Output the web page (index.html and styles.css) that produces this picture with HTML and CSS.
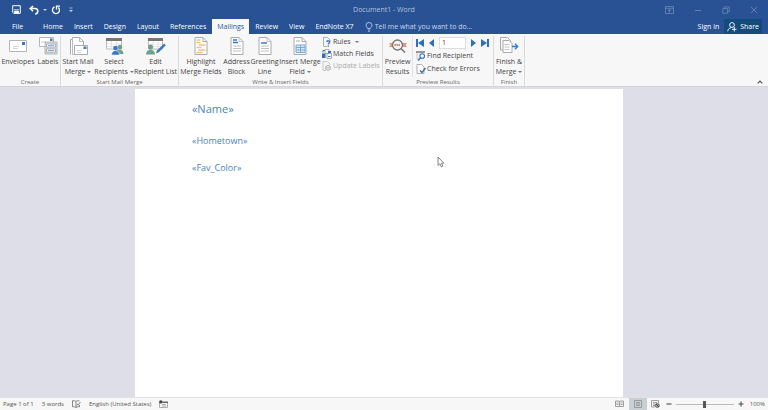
FILE: index.html
```html
<!DOCTYPE html>
<html lang="en">
<head>
<meta charset="utf-8">
<title>Document1 - Word</title>
<link rel="stylesheet" href="styles.css">
</head>
<body>
<header class="top">
  <div class="titlebar">
    <div class="quick">
      <button aria-label="Save"><svg width="9" height="9" viewBox="0 0 9 9"><path d="M.7.7h7.6v7.6H1.7l-1-1z" fill="none" stroke="#fff"/><path d="M2 4.7h5M2.5 6h4v2.500h-4z" fill="#fff" stroke="#fff" stroke-width=".7"/></svg></button>
      <button aria-label="Undo"><svg width="10" height="10" viewBox="0 0 10 10"><path d="M4 1L1.200 3.600 4 6.200M1.500 3.600H6c4 0 3.500 5 .2 5.300" fill="none" stroke="#fff" stroke-width="1.500"/></svg></button>
      <i class="caret quick-caret"></i>
      <button aria-label="Redo"><svg width="10" height="10" viewBox="0 0 10 10"><path d="M3.500 1.900a3.500 3.500 0 1 0 3.800.6M5.500 4.500V1.200H9" fill="none" stroke="#fff" stroke-width="1.300"/></svg></button>
      <button class="customize" aria-label="Customize Quick Access Toolbar"><svg width="4" height="6" viewBox="0 0 4 6"><path d="M.5 1h3" stroke="#c8d6ec" stroke-width=".8"/><path d="M0 3h4L2 5z" fill="#c8d6ec"/></svg></button>
    </div>
    <h1 class="title">Document1 - Word</h1>
    <div class="window-buttons">
      <button aria-label="Ribbon Display Options"><svg width="9" height="8" viewBox="0 0 9 8"><path d="M.5.5h8v7h-8zM.5 2.300h8M4.500 6.500v-3M3 4.800l1.500-1.300L6 4.800" fill="none" stroke="#6c8abb" stroke-width=".8"/></svg></button>
      <button aria-label="Minimize"><svg width="8" height="8" viewBox="0 0 8 8"><path d="M1 4.500h6" stroke="#6c8abb" stroke-width=".8"/></svg></button>
      <button aria-label="Restore"><svg width="8" height="8" viewBox="0 0 8 8"><path d="M.8 2.500h4.700v4.700H.8zM2.300 2.500V.9h4.900v4.700H5.500" fill="none" stroke="#6c8abb" stroke-width=".8"/></svg></button>
      <button aria-label="Close"><svg width="8" height="8" viewBox="0 0 8 8"><path d="M1 1l6 6M7 1L1 7" stroke="#6c8abb" stroke-width=".8"/></svg></button>
    </div>
  </div>
  <nav class="tabs">
    <button class="tab file">File</button>
    <button class="tab">Home</button>
    <button class="tab">Insert</button>
    <button class="tab">Design</button>
    <button class="tab">Layout</button>
    <button class="tab">References</button>
    <button class="tab active">Mailings</button>
    <button class="tab">Review</button>
    <button class="tab">View</button>
    <button class="tab">EndNote X7</button>
    <button class="tell"><svg width="8" height="10" viewBox="0 0 8 10"><path d="M2.600 6.500C2.500 5.300 1 4.700 1 3.200a3 2.700 0 0 1 6 0c0 1.500-1.500 2.100-1.600 3.300zM2.800 8h2.400M3.200 9.300h1.600" fill="none" stroke="#c8d6ec" stroke-width=".8"/></svg>Tell me what you want to do...</button>
    <div class="account">
      <button class="signin">Sign in</button>
      <button class="share"><svg width="10" height="10" viewBox="0 0 10 10"><circle cx="5" cy="3" r="2.400" fill="none" stroke="#fff" stroke-width=".9"/><path d="M.7 9.300C1 7 2.500 5.800 4.500 5.600M7.300 5v4.500M5 7.300h4.600" fill="none" stroke="#fff" stroke-width=".9"/></svg>Share</button>
    </div>
  </nav>
</header>

<section class="ribbon" aria-label="Mailings">
  <div class="group create">
    <div class="tools">
      <button class="big"><svg width="20" height="18" viewBox="0 0 20 18"><path d="M1.500 3.500h17v11h-17z" fill="#fff" stroke="#b4b4b4"/><path d="M14 5h3v3h-3z" fill="#3b78c3"/><path d="M5 9.500h6M5 11.500h5" stroke="#ccc" stroke-width=".8"/></svg><span>Envelopes</span></button>
      <button class="big"><svg width="20" height="18" viewBox="0 0 20 18"><path d="M1.500.5h14v9h-14z" fill="#fff" stroke="#b4b4b4"/><path d="M12 1.500h2.500V4H12z" fill="#3b78c3"/><path d="M3 5h5" stroke="#ccc"/><path d="M7 5h12v12H7z" fill="#ddd" stroke="#aaa" stroke-width=".8"/><path d="M8.500 7h9v3h-9zM8.500 12h9v3h-9z" fill="#fff" stroke="#8d9aaa" stroke-width=".7"/><path d="M10 8.500h6M10 13.500h6" stroke="#6f97c6" stroke-width=".8"/></svg><span>Labels</span></button>
    </div>
    <h2>Create</h2>
  </div>
  <div class="group start">
    <div class="tools">
      <button class="big"><svg width="20" height="18" viewBox="0 0 20 18"><path d="M2.500 17.500V2.500h2V.5h7l4 4v9" fill="#fff" stroke="#aaa"/><path d="M11.500.5v4h4M4.500 3v14.500h9" fill="none" stroke="#aaa" stroke-width=".8"/><path d="M6.500 8.500h13v9h-13z" fill="#fff" stroke="#aaa"/><path d="M15.500 9.500h3V12h-3z" fill="#3b78c3"/><path d="M9 13.500h5M9 15.500h4" stroke="#ccc" stroke-width=".8"/></svg><span>Start Mail</span><span>Merge <i class="caret"></i></span></button>
      <button class="big"><svg width="20" height="18" viewBox="0 0 20 18"><path d="M2.500 2h15v10h-15z" fill="#fff" stroke="#bbb"/><path d="M2 1h16v3H2z" fill="#777"/><path d="M3 7h14M3 9.500h14M7.500 4v8M12.500 4v8" stroke="#ddd" stroke-width=".8"/><circle cx="16" cy="10" r="2.300" fill="#6fa08e"/><path d="M11 17c0-6 8.500-6 8.500 0z" fill="#6fa08e"/><circle cx="11.500" cy="11" r="2.300" fill="#3b78c3"/><path d="M7.500 18c0-6 8-6 8 0z" fill="#3b78c3" stroke="#fff" stroke-width=".5"/></svg><span>Select</span><span>Recipients <i class="caret"></i></span></button>
      <button class="big"><svg width="20" height="18" viewBox="0 0 20 18"><path d="M2.500 2h14v10h-14z" fill="#fff" stroke="#bbb"/><path d="M2 1h15v3H2z" fill="#777"/><path d="M3 7h13M3 9.500h13M7 4v8M12 4v8" stroke="#ddd" stroke-width=".8"/><circle cx="4.500" cy="10" r="2.500" fill="#6fa08e"/><path d="M0 17.500c0-6.500 9-6.500 9 0z" fill="#6fa08e"/><path d="M10 16.500l1-3 7-7 1.800 1.800-7 7z" fill="#3b78c3"/></svg><span>Edit</span><span>Recipient List</span></button>
    </div>
    <h2>Start Mail Merge</h2>
  </div>
  <div class="group write">
    <div class="tools">
      <button class="big"><svg width="14" height="18" viewBox="0 0 14 18"><path d="M1 .5h8l4 4v13H1z" fill="#fff" stroke="#aaa"/><path d="M9 .5v4h4" fill="none" stroke="#aaa"/><path d="M2.500 3h4M2.500 5.500h4M4.500 8h7M2.500 10.500h5M4.500 13h7M2.500 15.500h6" stroke="#f5c377" stroke-width="1.500"/></svg><span>Highlight</span><span>Merge Fields</span></button>
      <button class="big"><svg width="14" height="18" viewBox="0 0 14 18"><path d="M1 .5h8l4 4v13H1z" fill="#fff" stroke="#aaa"/><path d="M9 .5v4h4M3 9h8M3 11.500h8M3 14h8" fill="none" stroke="#c0c0c0"/><path d="M3 3h4M3 5.500h5" stroke="#3b78c3" stroke-width="1.500"/></svg><span>Address</span><span>Block</span></button>
      <button class="big"><svg width="14" height="18" viewBox="0 0 14 18"><path d="M1 .5h8l4 4v13H1z" fill="#fff" stroke="#aaa"/><path d="M9 .5v4h4M3 9h8M3 11.500h8M3 14h8" fill="none" stroke="#c0c0c0"/><path d="M3 6h6" stroke="#3b78c3" stroke-width="1.500"/></svg><span>Greeting</span><span>Line</span></button>
      <button class="big"><svg width="14" height="18" viewBox="0 0 14 18"><path d="M1 .5h8l4 4v13H1z" fill="#fff" stroke="#aaa"/><path d="M9 .5v4h4M3 4h4" fill="none" stroke="#aaa"/><path d="M3 8h9v7.500H3z" fill="#d8eaf7" stroke="#75a9d8"/><path d="M3 10.500h9M3 13h9M7.500 8v7.500" stroke="#75a9d8"/></svg><span>Insert Merge</span><span>Field <i class="caret"></i></span></button>
      <div class="stack rules">
        <button class="small"><svg width="10" height="10" viewBox="0 0 10 10"><path d="M1.500 9V.5h4L8 3v1M1.500 9.500H5" fill="none" stroke="#999" stroke-width=".8"/><path d="M4.700 5c.2-1.800 3.400-1.500 3 .2C7.500 6.200 6.300 6 6.300 7.500M6.300 8.500v1.200" fill="none" stroke="#2f6fbd" stroke-width="1.300"/></svg>Rules <i class="caret"></i></button>
        <button class="small"><svg width="10" height="10" viewBox="0 0 10 10"><path d="M3 .5h4v4H3zM5 4.500h4.500v5H5z" fill="#fff" stroke="#999" stroke-width=".8"/><path d="M0 4.500h3.500V9H0zM6 2h3v2H6z" fill="#2f6fbd"/><path d="M1 3.500V1.500h2M6 7.500h2.500" fill="none" stroke="#2f6fbd"/></svg>Match Fields</button>
        <button class="small" disabled><svg width="10" height="10" viewBox="0 0 10 10"><path d="M1 9.500V.5h4.500L8 3v1M1 9.500h3" fill="none" stroke="#bbb" stroke-width=".8"/><circle cx="6" cy="6.800" r="2.400" fill="none" stroke="#aaa"/><path d="M4.500 6.800h3" stroke="#aaa"/></svg>Update Labels</button>
      </div>
    </div>
    <h2>Write &amp; Insert Fields</h2>
  </div>
  <div class="group preview">
    <div class="tools">
      <button class="big"><svg width="20" height="18" viewBox="0 0 20 18"><path d="M1 6h5v4H1l1.500-2zM19 6h-5v4h5l-1.500-2z" fill="#e3937f"/><circle cx="9.500" cy="8" r="5" fill="#f4f4f4" stroke="#777" stroke-width="1.300"/><path d="M6.500 8h6" stroke="#c98a7d" stroke-width="2" stroke-dasharray="1.500 .5"/><path d="M13 11.500l4 4" stroke="#777" stroke-width="1.600"/></svg><span>Preview</span><span>Results</span></button>
      <div class="stack records">
        <div class="navigator">
          <button aria-label="First Record"><svg width="8" height="8" viewBox="0 0 8 8"><path d="M0 0h2v8H0zM8 0v8L2 4z" fill="#2f6fbd"/></svg></button>
          <button aria-label="Previous Record"><svg width="5" height="8" viewBox="0 0 5 8"><path d="M5 0v8L0 4z" fill="#2f6fbd"/></svg></button>
          <input type="text" value="1" aria-label="Record">
          <button aria-label="Next Record"><svg width="5" height="8" viewBox="0 0 5 8"><path d="M0 0v8l5-4z" fill="#2f6fbd"/></svg></button>
          <button aria-label="Last Record"><svg width="8" height="8" viewBox="0 0 8 8"><path d="M6 0h2v8H6zM0 0v8l6-4z" fill="#2f6fbd"/></svg></button>
        </div>
        <button class="small"><svg width="10" height="10" viewBox="0 0 10 10"><path d="M0 1h9" stroke="#777" stroke-width="1.500"/><path d="M1 2v6h2" fill="none" stroke="#bbb" stroke-width=".8"/><circle cx="6.200" cy="5" r="2.300" fill="#fff" stroke="#2f6fbd" stroke-width="1.100"/><path d="M4.600 6.700L2 9.500" stroke="#2f6fbd" stroke-width="1.300"/></svg>Find Recipient</button>
        <button class="small"><svg width="10" height="10" viewBox="0 0 10 10"><path d="M1 .5h4.500L8 3v6.500H1z" fill="#fff" stroke="#999" stroke-width=".8"/><path d="M4 6.500l2 2L9.500 4" fill="none" stroke="#2f6fbd" stroke-width="1.400"/></svg>Check for Errors</button>
      </div>
    </div>
    <h2>Preview Results</h2>
  </div>
  <div class="group finish">
    <div class="tools">
      <button class="big"><svg width="20" height="18" viewBox="0 0 20 18"><path d="M1.500 13V.5h7l3 3v4M1.500 13H4" fill="none" stroke="#aaa"/><path d="M4 15.500V3.500h6l3 3v9z" fill="#fff" stroke="#aaa"/><path d="M5.500 7.500h5M5.500 10h5M5.500 12.500h5" stroke="#c4c4c4"/><path d="M13 9.500h5.500M16 6.800l2.700 2.700L16 12.200" fill="none" stroke="#2f80cc" stroke-width="1.400"/></svg><span>Finish &amp;</span><span>Merge <i class="caret"></i></span></button>
    </div>
    <h2>Finish</h2>
  </div>
  <button class="collapse" aria-label="Collapse the Ribbon"><svg width="6" height="4" viewBox="0 0 6 4"><path d="M.7 3.300L3 1l2.300 2.300" fill="none" stroke="#555" stroke-width="1.200"/></svg></button>
</section>

<main class="workspace">
  <article class="page">
    <p class="name">«Name»</p>
    <p>«Hometown»</p>
    <p>«Fav_Color»</p>
  </article>
  <svg class="pointer" width="8" height="12" viewBox="0 0 8 12"><path d="M1 1v8.500l2-1.800 1.300 3.200 1.500-.7-1.300-3h2.400z" fill="#fff" stroke="#777" stroke-width=".9"/></svg>
</main>

<footer class="status">
  <span>Page 1 of 1</span>
  <span>3 words</span>
  <button aria-label="Proofing"><svg width="9" height="8" viewBox="0 0 9 8"><path d="M4 1.500C3 .7 2 .7.500.7v6c1.500 0 2.500 0 3.500.8zM4 1.500C5 .7 6 .7 7.500.7M4 7.500c1-.8 2-.8 3.500-.8V5M5 4l1 1.200L8.500 2" fill="none" stroke="#666" stroke-width=".8"/></svg></button>
  <span>English (United States)</span>
  <button aria-label="Macro Recording"><svg width="9" height="8" viewBox="0 0 9 8"><path d="M.5 2.500h8v5h-8zM3 4.500h4M3 6h4" fill="none" stroke="#999" stroke-width=".8"/><path d="M3.500 1.500H9v1.500H3.500z" fill="#666"/><circle cx="1.800" cy="1.900" r="1.700" fill="#444"/></svg></button>
  <div class="views">
    <button aria-label="Read Mode"><svg width="9" height="8" viewBox="0 0 9 8"><path d="M.5 1h3.500l.5.500L5 1h3.500v5.500H5l-.5.500-.5-.5H.5zM4.500 1.500V7M1.500 3h2M1.500 4.500h2M5.500 3h2M5.500 4.500h2" fill="none" stroke="#888" stroke-width=".8"/></svg></button>
    <button class="on" aria-label="Print Layout"><svg width="8" height="8" viewBox="0 0 8 8"><path d="M.5.5h7v7h-7zM2 2.500h4M2 4h4M2 5.500h4" fill="none" stroke="#899193" stroke-width=".8"/></svg></button>
    <button aria-label="Web Layout"><svg width="9" height="8" viewBox="0 0 9 8"><path d="M4 7H.5V.5h7V3M2 2.500h4M2 4h2M2 5.500h2" fill="none" stroke="#888" stroke-width=".8"/><circle cx="6.300" cy="5.500" r="2" fill="#aaa" stroke="#555" stroke-width=".8"/><path d="M5 4l3 3" stroke="#444"/></svg></button>
  </div>
  <button class="zoom-step" aria-label="Zoom Out"><svg width="6" height="6" viewBox="0 0 6 6"><path d="M.5 3h5" stroke="#555" stroke-width="1.200"/></svg></button>
  <input class="zoom" type="range" min="0" max="100" value="50" aria-label="Zoom">
  <button class="zoom-step" aria-label="Zoom In"><svg width="6" height="6" viewBox="0 0 6 6"><path d="M.5 3h5M3 .5v5" stroke="#555" stroke-width="1.200"/></svg></button>
  <span class="percent">100%</span>
</footer>
</body>
</html>
```
FILE: styles.css
```css
* { box-sizing: border-box; }

body {
  margin: 0;
  min-height: 100vh;
  display: flex;
  flex-direction: column;
  font: 7px/10px "Open Sans", "Noto Sans", sans-serif;
  color: #444;
  background: #f7f7f7;
}

button, input { font: inherit; color: inherit; }
button {
  margin: 0;
  padding: 0;
  border: 0;
  background: none;
  white-space: nowrap;
}
svg { display: block; flex: none; }
h1, h2, p { margin: 0; font-weight: 400; }

.caret {
  display: inline-block;
  vertical-align: middle;
  border: 2px solid transparent;
  border-top-color: #777;
  border-bottom: 0;
}

/* Title bar and tabs */
.top { background: #285294; color: #fff; }
.titlebar {
  display: grid;
  grid-template-columns: 1fr auto 1fr;
  align-items: center;
  height: 19px;
}
.quick { display: flex; align-items: center; padding-left: 12px; gap: 8px; }
.quick-caret { margin-left: -4px; margin-right: -4px; border-top-color: #c8d6ec; }
.title { font-size: 7px; color: #b0c1de; }
.window-buttons { display: flex; justify-content: flex-end; gap: 20px; padding-right: 10px; }

.tabs { display: flex; gap: 1px; height: 15px; }
.tab { padding: 0 5px; }
.file { padding: 0 14px 0 12px; }
.active { background: #f7f7f7; color: #2b579a; }
.tell { display: flex; align-items: center; gap: 2px; padding-left: 5px; color: #c8d6ec; }
.account { display: flex; margin-left: auto; padding-right: 6px; gap: 5px; }
.share { display: flex; align-items: center; gap: 3px; padding: 0 3px; background: #134b7c; }

/* Ribbon */
.ribbon {
  display: flex;
  height: 53px;
  padding-top: 2px;
  border-bottom: 1px solid #d5d5d8;
  background: #f7f7f7;
}
.group {
  display: flex;
  flex-direction: column;
  justify-content: space-between;
  height: 50px;
  border-right: 1px solid #dadada;
}
.group h2 { font-size: 6px; line-height: 8px; text-align: center; color: #666; }
.tools { display: grid; height: 41px; }
.create .tools { grid-template-columns: 36px 24px; }
.start .tools { grid-template-columns: 34px 38px 45px; }
.write .tools { grid-template-columns: 44px 27px 29px 42px 61px; }
.preview .tools { grid-template-columns: 29px 81px; }
.finish .tools { grid-template-columns: 30px; }

.big { display: flex; flex-direction: column; align-items: center; }
.big svg { margin: 1px 0 2px; }
.stack { display: flex; flex-direction: column; align-items: flex-start; }
.small { display: flex; align-items: center; gap: 1px; }
.rules { gap: 2px; padding: 1px 0 0 1px; }
.small .caret { margin-left: 3px; }
.small:disabled { color: #aaa; }
.records { gap: 3px; padding: 1px 0 0 3px; border-left: 1px solid #e2e2e2; }
.navigator { display: flex; align-items: center; gap: 5px; height: 11px; }
.navigator input {
  width: 27px;
  height: 12px;
  padding: 0 2px;
  border: 1px solid #ddd;
  background: #fff;
}
.collapse { align-self: flex-end; margin: 0 5px 2px auto; }

/* Document */
.workspace {
  position: relative;
  flex: 1;
  display: flex;
  justify-content: center;
  padding: 2px 10px 0 0;
  background: #dddee8;
}
.page {
  width: 64.4%;
  padding: 10px 57px;
  background: #fff;
  font-size: 9px;
  line-height: 27px;
  color: #4a82bd;
}
.page .name { font-size: 11px; line-height: 20px; margin-bottom: 8px; }
.pointer { position: absolute; left: 437px; top: 69px; }

/* Status bar */
.status {
  display: flex;
  align-items: center;
  height: 13px;
  padding: 0 3px;
  gap: 8px;
  font-size: 6px;
  border-top: 1px solid #e2e2e2;
  color: #555;
}
.views { display: flex; align-self: stretch; margin-left: auto; margin-right: -3px; }
.views button { display: grid; place-items: center; width: 18px; }
.views .on { background: #c9d0d3; }
.zoom-step { margin: 0 -4px; }
.zoom { appearance: none; width: 58px; height: 8px; margin: 0; background: linear-gradient(#bbb, #bbb) center / 100% 1px no-repeat; }
.zoom::-webkit-slider-thumb { appearance: none; width: 3px; height: 7px; background: #555; }
.percent { margin-left: 2px; }
```
